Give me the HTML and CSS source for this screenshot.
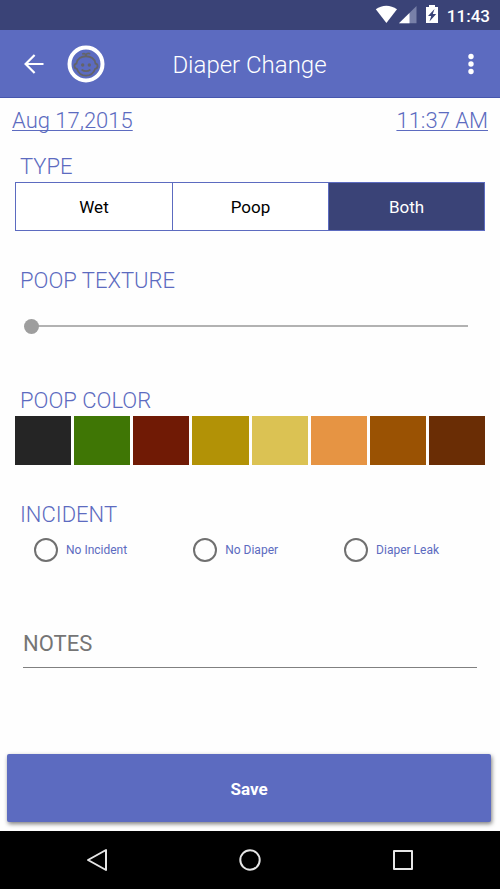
FILE: index.html
```html
<!DOCTYPE html>
<html lang="en">
<head>
<meta charset="utf-8">
<meta name="viewport" content="width=device-width, initial-scale=1">
<title>Diaper Change</title>
<link rel="stylesheet" href="styles.css">
</head>
<body>
<div class="status-bar">
  <svg class="status-icons" width="66" height="20" viewBox="0 0 66 20" aria-hidden="true">
    <path fill="#fff" d="M0.800 4.300C7-0.500 15.500-0.500 22 4.300L11.400 18z"/>
    <path fill="#7880a8" d="M41.500 1v17.300H24z"/>
    <path fill="#fff" d="M34.500 8v10.300H24z"/>
    <path fill="#fff" fill-rule="evenodd" d="M51 2h3V0h6v2h3v16H51zM59.500 4L53 11h3.200L54.500 16.500L61.200 9H57.800z"/>
  </svg>
  <span class="clock">11:43</span>
</div>
<header class="toolbar">
  <button class="icon-button" type="button" aria-label="Back">
    <svg width="22" height="22" viewBox="0 0 22 22" fill="none" stroke="#fff" stroke-width="2.200"><path d="M20.500 11H3M11.600 2L2.600 11L11.600 20"/></svg>
  </button>
  <button class="icon-button avatar" type="button" aria-label="Child profile">
    <svg width="38" height="38" viewBox="0 0 38 38" fill="none" stroke="#646468" stroke-width="1.800" stroke-linecap="round">
      <circle cx="19" cy="19" r="16.500" stroke="#fff" stroke-width="4"/>
      <path d="M9.500 18.500C10.500 8.800 27.500 8.800 28.500 18.500C31.300 19 31.300 23.300 28.200 23.800C25 33 13 33 9.800 23.800C6.700 23.300 6.700 19 9.500 18.500z"/>
      <path d="M19 11C19 9 20.300 8 22.500 8.700M18.800 10.200C18.300 8.700 17.300 8.300 15.800 8.800"/>
      <path d="M15.200 25C17 26.600 21 26.600 22.800 25"/>
      <g fill="#646468" stroke="none"><circle cx="15.700" cy="20" r="1.700"/><circle cx="22.300" cy="20" r="1.700"/></g>
    </svg>
  </button>
  <h1 class="title">Diaper Change</h1>
  <button class="icon-button more" type="button" aria-label="More options">
    <svg width="6" height="22" viewBox="0 0 6 22" fill="#fff"><circle cx="3" cy="3.500" r="2.700"/><circle cx="3" cy="11" r="2.700"/><circle cx="3" cy="18.500" r="2.700"/></svg>
  </button>
</header>
<main class="form">
  <div class="when">
    <a href="#date">Aug 17,2015</a>
    <a href="#time">11:37 AM</a>
  </div>
  <section class="group">
    <h2>TYPE</h2>
    <div class="segments">
      <button type="button">Wet</button>
      <button type="button">Poop</button>
      <button type="button" class="selected" aria-pressed="true">Both</button>
    </div>
  </section>
  <section class="group">
    <h2><label for="texture">POOP TEXTURE</label></h2>
    <input class="slider" id="texture" type="range" min="0" max="100" value="0">
  </section>
  <section class="group">
    <h2>POOP COLOR</h2>
    <div class="swatches">
      <button type="button" class="black" aria-label="Black"></button>
      <button type="button" class="green" aria-label="Green"></button>
      <button type="button" class="red" aria-label="Red"></button>
      <button type="button" class="mustard" aria-label="Mustard"></button>
      <button type="button" class="yellow" aria-label="Yellow"></button>
      <button type="button" class="orange" aria-label="Orange"></button>
      <button type="button" class="tan" aria-label="Light brown"></button>
      <button type="button" class="brown" aria-label="Brown"></button>
    </div>
  </section>
  <section class="group">
    <h2>INCIDENT</h2>
    <div class="radios">
      <label><input type="radio" name="incident">No Incident</label>
      <label><input type="radio" name="incident">No Diaper</label>
      <label><input type="radio" name="incident">Diaper Leak</label>
    </div>
  </section>
  <input class="notes" type="text" placeholder="NOTES" aria-label="Notes">
  <button class="save" type="button">Save</button>
</main>
<nav class="system-nav">
  <button class="icon-button" type="button" aria-label="System back"><svg width="24" height="24" viewBox="0 0 24 24" fill="none" stroke="#e6e6e6" stroke-width="2" stroke-linejoin="round"><path d="M21 2V22L3 12z"/></svg></button>
  <button class="icon-button" type="button" aria-label="Home"><svg width="24" height="24" viewBox="0 0 24 24" fill="none" stroke="#e6e6e6" stroke-width="2"><circle cx="12" cy="12" r="9.700"/></svg></button>
  <button class="icon-button" type="button" aria-label="Recent apps"><svg width="24" height="24" viewBox="0 0 24 24" fill="none" stroke="#e6e6e6" stroke-width="2" stroke-linejoin="round"><path d="M3 3H21V21H3z"/></svg></button>
</nav>
</body>
</html>
```
FILE: styles.css
```css
* { box-sizing: border-box; }

body {
  margin: 0;
  min-height: 100vh;
  display: flex;
  flex-direction: column;
  background: #fefefe;
  font-family: Roboto, "Liberation Sans", sans-serif;
  color: #5c6bc0;
}

button { font: inherit; border: 0; padding: 0; cursor: pointer; }
h1, h2 { margin: 0; font-weight: 300; }

.icon-button { display: flex; background: none; }

.status-bar {
  height: 30px;
  padding: 0 10px;
  display: flex;
  align-items: center;
  justify-content: flex-end;
  gap: 6px;
  background: #3a4377;
  color: #fff;
}
.clock { font-size: 17px; font-weight: 500; line-height: 24px; padding-top: 2px; }

.toolbar {
  height: 68px;
  padding: 0 26px 0 23px;
  display: grid;
  grid-template-columns: 44px 38px 1fr 80px;
  align-items: center;
  background: #5c6bc0;
  border-bottom: 1px solid #4656ae;
  color: #fff;
}
.title { padding-top: 3px; font-size: 24px; line-height: 32px; text-align: center; }
.more { justify-self: end; }

.form {
  flex: 1;
  padding: 9px 0;
  display: flex;
  flex-direction: column;
}

.when {
  padding: 0 12px;
  display: flex;
  justify-content: space-between;
  font-size: 22px;
  font-weight: 300;
  line-height: 28px;
}
.when a {
  color: inherit;
  text-decoration-thickness: 1px;
  text-underline-offset: 2px;
  text-decoration-skip-ink: none;
}

.group { padding: 0 15px; margin-bottom: 36px; }
.when + .group { margin-top: 18px; }
.group h2 {
  padding-left: 5px;
  margin-bottom: 1px;
  font-size: 22px;
  line-height: 28px;
}

.segments {
  height: 49px;
  display: grid;
  grid-template-columns: repeat(3, 1fr);
  border: 1px solid #5c6bc0;
}
.segments button {
  background: #fff;
  color: #000;
  font-size: 17px;
}
.segments button + button { border-left: 1px solid #5c6bc0; }
.segments .selected { background: #3a4377; color: #fff; }

.slider {
  appearance: none;
  display: block;
  width: calc(100% - 18px);
  height: 20px;
  margin: 21px 9px 51px;
  background: linear-gradient(#b2b2b2, #b2b2b2) center / calc(100% - 16px) 2px no-repeat;
}
.group .slider { margin-bottom: 15px; }
.slider::-webkit-slider-thumb {
  appearance: none;
  width: 15px;
  height: 15px;
  border-radius: 50%;
  background: #9e9e9e;
}

.swatches {
  height: 49px;
  display: grid;
  grid-template-columns: repeat(8, 1fr);
  gap: 3px;
}
.black { background: #252525; }
.green { background: #3f7605; }
.red { background: #701a05; }
.mustard { background: #b29206; }
.yellow { background: #dbc253; }
.orange { background: #e69443; }
.tan { background: #9a5203; }
.brown { background: #6a2d05; }

.radios {
  padding: 8px 46px 0 19px;
  display: flex;
  justify-content: space-between;
}
.radios label {
  display: flex;
  align-items: center;
  gap: 8px;
  font-size: 12px;
  line-height: 24px;
}
.radios input {
  appearance: none;
  width: 24px;
  height: 24px;
  margin: 0;
  border: 2px solid #707070;
  border-radius: 50%;
}
.radios input:checked { background: radial-gradient(#5c6bc0 45%, transparent 50%); }

.notes {
  height: 48px;
  margin: 22px 23px 0;
  padding: 0;
  border: 0;
  border-bottom: 1px solid #808080;
  background: none;
  font-family: inherit;
  font-size: 22px;
  color: #333;
}
.notes::placeholder { color: #757575; opacity: 1; }

.save {
  height: 68px;
  margin: auto 9px 0 7px;
  padding-top: 2px;
  border-radius: 2px;
  background: #5c6bc0;
  box-shadow: 1px 2px 4px rgba(0, 0, 0, 0.5);
  color: #fff;
  font-size: 17px;
  font-weight: 700;
}

.system-nav {
  height: 58px;
  padding: 0 85px;
  display: flex;
  align-items: center;
  justify-content: space-between;
  background: #000;
}
```
